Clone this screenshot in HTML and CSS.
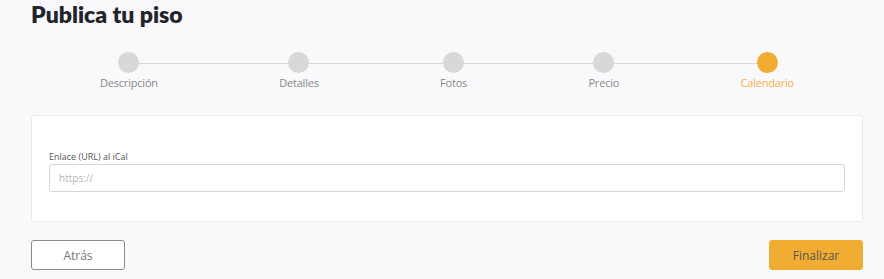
FILE: index.html
```html
<!DOCTYPE html>
<html lang="es">
<head>
<meta charset="utf-8">
<title>Publica tu piso</title>
<link rel="stylesheet" href="styles.css">
</head>
<body>
<div class="page">
  <h1 class="title">Publica tu piso</h1>
  <div class="stepper">
    <div class="track"></div>
    <div class="step"><span class="dot"></span><span class="label">Descripción</span></div>
    <div class="step"><span class="dot"></span><span class="label">Detalles</span></div>
    <div class="step"><span class="dot"></span><span class="label">Fotos</span></div>
    <div class="step"><span class="dot"></span><span class="label">Precio</span></div>
    <div class="step active"><span class="dot"></span><span class="label">Calendario</span></div>
  </div>
  <div class="card">
    <label class="field-label" for="ical">Enlace (URL) al iCal</label>
    <input class="field-input" id="ical" type="text" placeholder="https://">
  </div>
  <div class="actions">
    <button class="btn btn-back">Atrás</button>
    <button class="btn btn-finish">Finalizar</button>
  </div>
</div>
</body>
</html>
```
FILE: styles.css
```css
html, body {
  margin: 0;
  padding: 0;
  background: #f9f9fb;
}
body {
  font-family: "Open Sans", "Liberation Sans", sans-serif;
  width: 884px;
  height: 279px;
  overflow: hidden;
}
.page {
  padding: 0 21px 0 31px;
}
.title {
  margin: 0;
  padding-top: 0;
  font-family: "Lato", "Inter", sans-serif;
  font-weight: 800;
  font-size: 23px;
  line-height: 28px;
  color: #23232b;
}
.stepper {
  position: relative;
  display: flex;
  justify-content: space-between;
  padding: 24px 69px 0 69px;
  height: 64px;
  box-sizing: border-box;
}
.track {
  position: absolute;
  top: 35px;
  left: 97px;
  right: 96px;
  height: 1px;
  background: #d9d9dc;
}
.step {
  position: relative;
  display: flex;
  flex-direction: column;
  align-items: center;
}
.dot {
  width: 21px;
  height: 21px;
  border-radius: 50%;
  background: #d8d8d8;
}
.label {
  margin-top: 2px;
  font-size: 11px;
  line-height: 15px;
  color: #888;
  letter-spacing: -0.2px;
}
.active .dot { background: #f0ad32; }
.active .label { color: #efb04a; }
.card {
  margin-top: 23px;
  background: #fff;
  border: 1px solid #ebebee;
  border-radius: 3px;
  height: 107px;
  box-sizing: border-box;
  padding: 35px 17px 0 17px;
  display: flex;
  flex-direction: column;
}
.field-label {
  font-size: 9px;
  line-height: 12px;
  color: #555;
  margin-bottom: 1px;
}
.field-input {
  height: 28px;
  box-sizing: border-box;
  border: 1px solid #d6d6d6;
  border-radius: 3px;
  padding: 0 9px;
  font-family: "Open Sans", "Liberation Sans", sans-serif;
  font-size: 10px;
  color: #333;
  background: #fff;
  outline: none;
}
.field-input::placeholder { color: #b5b5b5; }
.actions {
  display: flex;
  justify-content: space-between;
  margin-top: 18px;
}
.btn {
  width: 94px;
  height: 30px;
  box-sizing: border-box;
  border-radius: 3px;
  font-family: "Open Sans", "Liberation Sans", sans-serif;
  font-size: 12px;
  cursor: pointer;
}
.btn-back {
  background: #fff;
  border: 1px solid #8a8a8a;
  color: #777;
}
.btn-finish {
  background: #f0ad32;
  border: 1px solid #f0ad32;
  color: #555;
}
```
